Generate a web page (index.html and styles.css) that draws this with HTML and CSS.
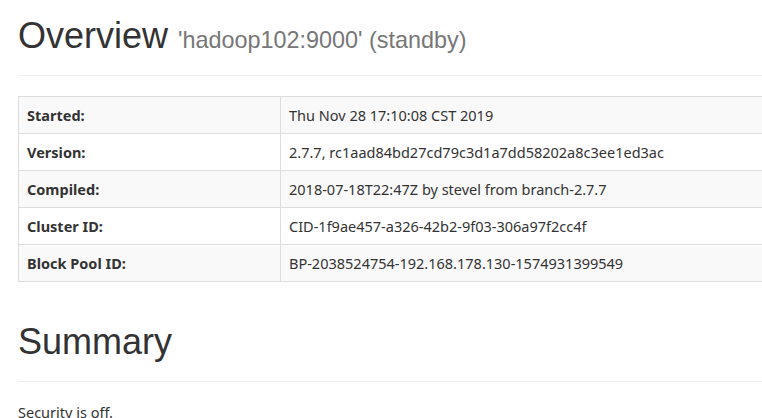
FILE: index.html
```
<!DOCTYPE html>
<html>
<head>
<meta charset="utf-8">
<title>Namenode information</title>
<link rel="stylesheet" href="styles.css">
</head>
<body>
<div class="container">
  <div class="page-header first">
    <h1>Overview <small>'hadoop102:9000' (standby)</small></h1>
  </div>
  <table class="table">
    <tr><th>Started:</th><td>Thu Nov 28 17:10:08 CST 2019</td></tr>
    <tr><th>Version:</th><td>2.7.7, rc1aad84bd27cd79c3d1a7dd58202a8c3ee1ed3ac</td></tr>
    <tr><th>Compiled:</th><td>2018-07-18T22:47Z by stevel from branch-2.7.7</td></tr>
    <tr><th>Cluster ID:</th><td>CID-1f9ae457-a326-42b2-9f03-306a97f2cc4f</td></tr>
    <tr><th>Block Pool ID:</th><td>BP-2038524754-192.168.178.130-1574931399549</td></tr>
  </table>
  <div class="page-header">
    <h1>Summary</h1>
  </div>
  <p class="text">Security is off.</p>
</div>
</body>
</html>
```
FILE: styles.css
```
html {
  overflow: hidden;
}
body {
  margin: 0;
  font-family: "Noto Sans", "Liberation Sans", sans-serif;
  font-size: 14.5px;
  line-height: 20px;
  color: #333;
  background: #fff;
}
.container {
  width: 1140px;
  padding-left: 18px;
  padding-top: 1px;
}
.page-header {
  margin: 40px 0 20px;
  padding-bottom: 9px;
  border-bottom: 1px solid #eee;
}
.page-header.first {
  margin-top: 15.4px;
}
h1 {
  margin: 0 0 10px;
  font-family: "Liberation Sans", Arial, sans-serif;
  font-size: 36px;
  font-weight: 500;
  line-height: 1.1;
  color: #333;
}
h1 small {
  font-size: 65%;
  font-weight: normal;
  line-height: 1;
  color: #777;
}
.table {
  width: 100%;
  border-collapse: collapse;
  border-spacing: 0;
  border: 1px solid #ddd;
  margin-bottom: 20px;
}
.table th,
.table td {
  padding: 8px;
  line-height: 20px;
  border: 1px solid #ddd;
  text-align: left;
  vertical-align: top;
}
.table th {
  width: 245px;
  font-weight: bold;
}
.table tr:nth-child(odd) {
  background: #f9f9f9;
}
.text {
  margin: 0 0 10px;
}
```
